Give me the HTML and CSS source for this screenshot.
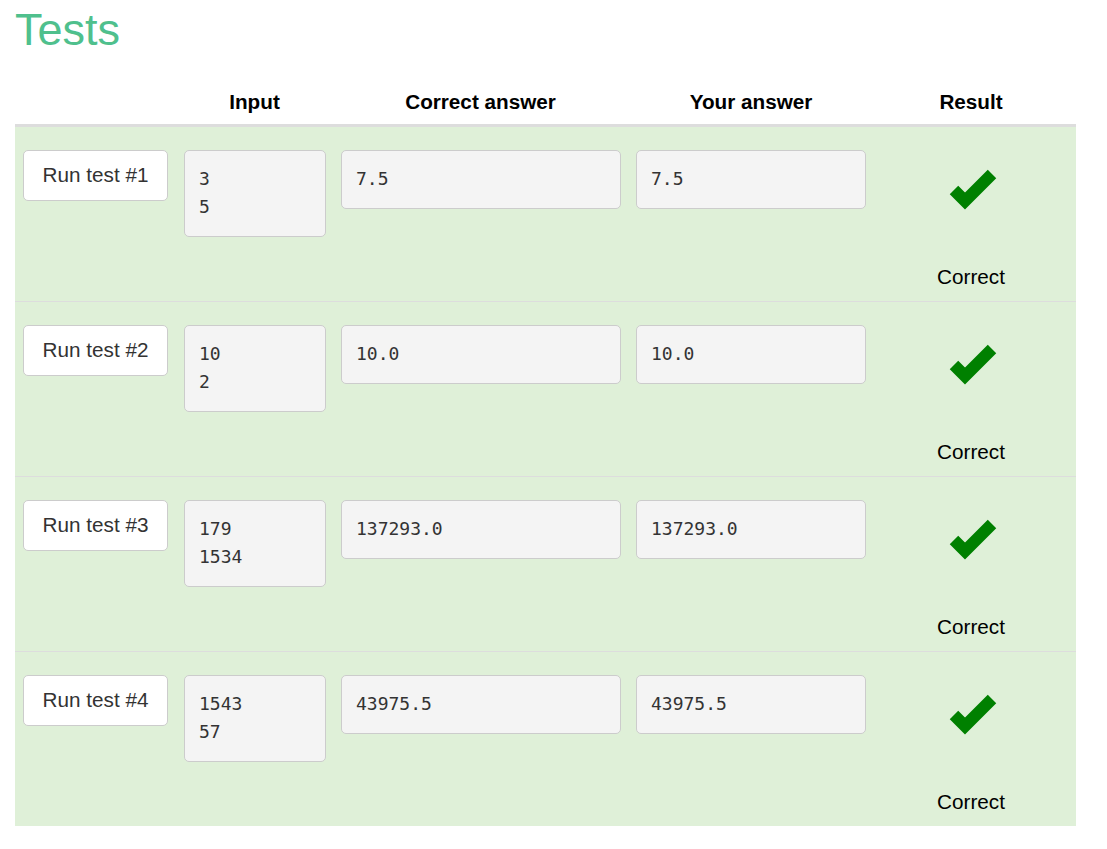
FILE: index.html
```html
<!DOCTYPE html>
<html>
<head>
<meta charset="utf-8">
<link rel="stylesheet" href="styles.css">
</head>
<body>
<div class="page">
  <h1 class="title">Tests</h1>
  <div class="tests">
    <div class="row head">
      <div class="cell"></div>
      <div class="cell">Input</div>
      <div class="cell">Correct answer</div>
      <div class="cell">Your answer</div>
      <div class="cell res">Result</div>
    </div>

    <div class="row">
      <div class="cell"><button class="run">Run test #1</button></div>
      <div class="cell"><pre class="box in">3
5</pre></div>
      <div class="cell"><pre class="box exp">7.5</pre></div>
      <div class="cell"><pre class="box got">7.5</pre></div>
      <div class="cell res">
        <svg class="tick" width="54" height="44" viewBox="0 0 54 44"><polyline points="10,22 21,33 48,6" fill="none" stroke="#008000" stroke-width="12" stroke-linejoin="miter" stroke-linecap="butt"/></svg>
        <div class="status">Correct</div>
      </div>
    </div>

    <div class="row">
      <div class="cell"><button class="run">Run test #2</button></div>
      <div class="cell"><pre class="box in">10
2</pre></div>
      <div class="cell"><pre class="box exp">10.0</pre></div>
      <div class="cell"><pre class="box got">10.0</pre></div>
      <div class="cell res">
        <svg class="tick" width="54" height="44" viewBox="0 0 54 44"><polyline points="10,22 21,33 48,6" fill="none" stroke="#008000" stroke-width="12" stroke-linejoin="miter" stroke-linecap="butt"/></svg>
        <div class="status">Correct</div>
      </div>
    </div>

    <div class="row">
      <div class="cell"><button class="run">Run test #3</button></div>
      <div class="cell"><pre class="box in">179
1534</pre></div>
      <div class="cell"><pre class="box exp">137293.0</pre></div>
      <div class="cell"><pre class="box got">137293.0</pre></div>
      <div class="cell res">
        <svg class="tick" width="54" height="44" viewBox="0 0 54 44"><polyline points="10,22 21,33 48,6" fill="none" stroke="#008000" stroke-width="12" stroke-linejoin="miter" stroke-linecap="butt"/></svg>
        <div class="status">Correct</div>
      </div>
    </div>

    <div class="row">
      <div class="cell"><button class="run">Run test #4</button></div>
      <div class="cell"><pre class="box in">1543
57</pre></div>
      <div class="cell"><pre class="box exp">43975.5</pre></div>
      <div class="cell"><pre class="box got">43975.5</pre></div>
      <div class="cell res">
        <svg class="tick" width="54" height="44" viewBox="0 0 54 44"><polyline points="10,22 21,33 48,6" fill="none" stroke="#008000" stroke-width="12" stroke-linejoin="miter" stroke-linecap="butt"/></svg>
        <div class="status">Correct</div>
      </div>
    </div>
  </div>
</div>
</body>
</html>
```

FILE: styles.css
```css
html, body {
  margin: 0;
  padding: 0;
  background: #ffffff;
}

body {
  font-family: "Liberation Sans", Arial, sans-serif;
  font-size: 20.7px;
  color: #000;
}

.page {
  padding-left: 15px;
}

.title {
  margin: 6px 0 27px 0;
  font-size: 45px;
  line-height: 47px;
  font-weight: normal;
  color: #4fc08d;
}

.tests {
  width: 1061px;
}

.row {
  display: grid;
  grid-template-columns: 161px 157px 295px 246px 1fr;
  box-sizing: border-box;
  height: 175px;
  border-top: 1px solid #dddddd;
  background: #dff0d8;
}

.row.head {
  height: 46px;
  border-top: 0;
  border-bottom: 2px solid #dddddd;
  background: #ffffff;
  font-weight: bold;
}

.cell {
  padding: 23px 0 0 8px;
  box-sizing: border-box;
}

.head .cell {
  padding: 8px 0 0 0;
  line-height: 28px;
  text-align: center;
}

.cell.res,
.head .cell.res {
  padding-left: 0;
  padding-right: 8px;
  text-align: center;
}

.run {
  display: block;
  width: 145px;
  height: 51px;
  margin: 0;
  padding: 0 0 2px 0;
  background: #ffffff;
  border: 1px solid #cccccc;
  border-radius: 5px;
  font-family: "Liberation Sans", Arial, sans-serif;
  font-size: 20.7px;
  line-height: 28px;
  color: #333333;
}

.box {
  margin: 0;
  box-sizing: border-box;
  padding: 14px 14px 15px 14px;
  background: #f4f4f4;
  border: 1px solid #cccccc;
  border-radius: 5px;
  font-family: "DejaVu Sans Mono", "Liberation Mono", monospace;
  font-size: 18px;
  line-height: 28px;
  color: #333333;
  white-space: pre;
}

.box.in { width: 142px; }
.box.exp { width: 280px; }
.box.got { width: 230px; }

.tick {
  display: block;
  margin: 18px auto 0 auto;
}

.status {
  margin-top: 51px;
  line-height: 28px;
}
```
